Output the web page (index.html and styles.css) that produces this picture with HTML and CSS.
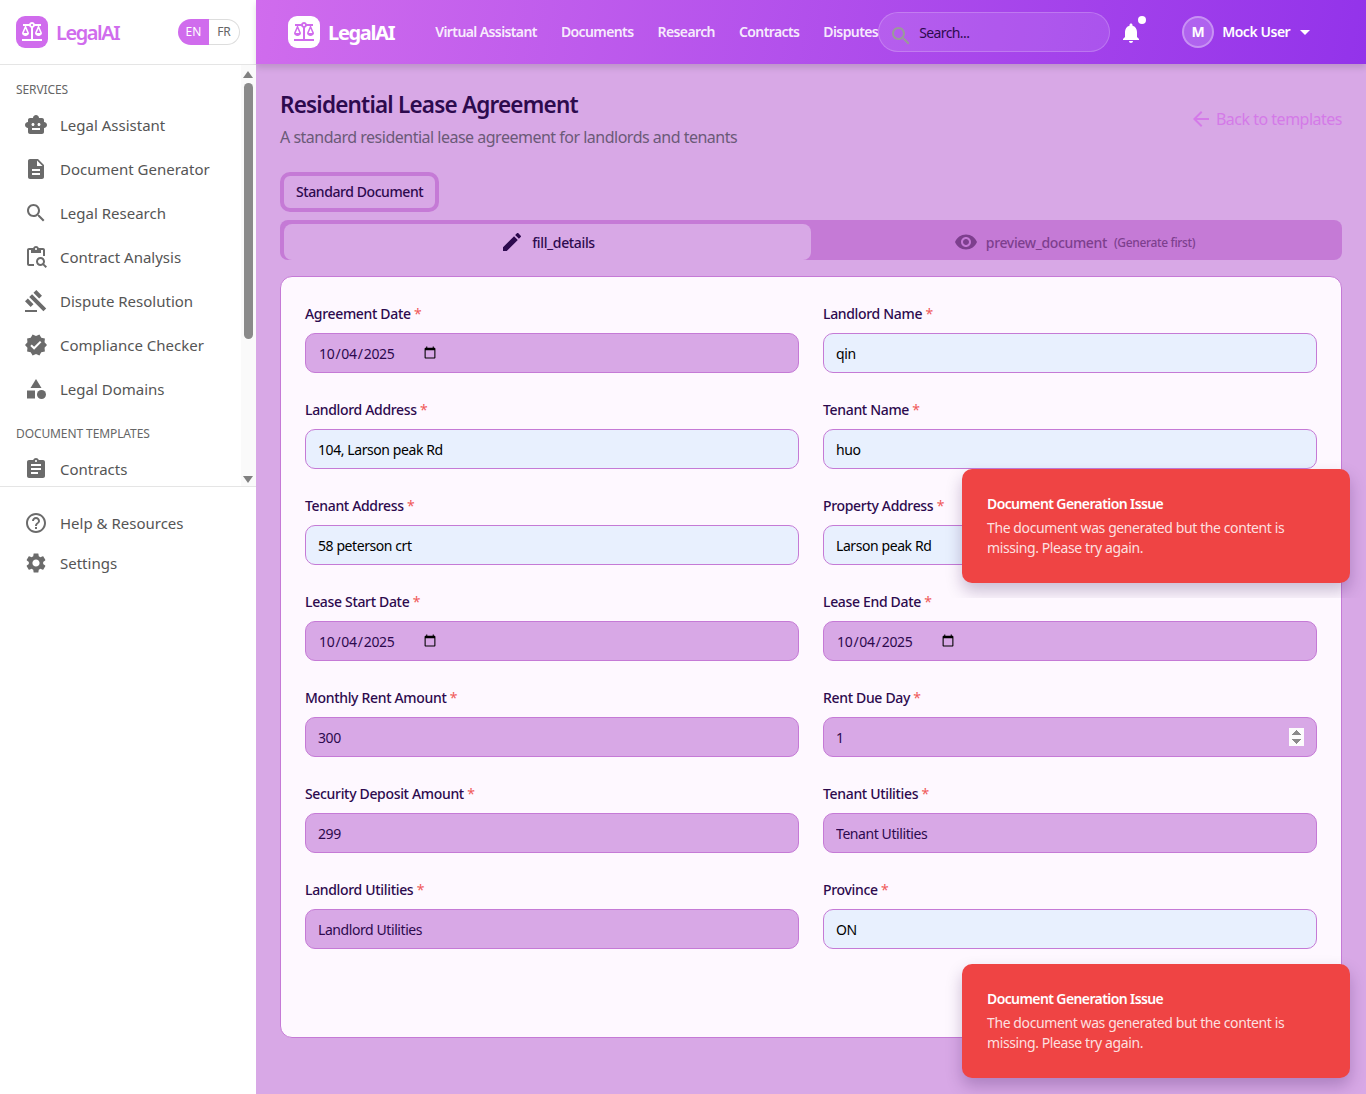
FILE: index.html
```html
<!DOCTYPE html>
<html>
<head>
    <title>LegalAI - Residential Lease Agreement</title>
    <link rel="stylesheet" href="styles.css">
</head>
<body>
    <!-- left sidebar -->
    <aside class="sidebar">
        <div class="side-head">
            <span class="logo logo-purple">
                <svg viewBox="0 0 24 24"><path d="M13 7.83c.85-.3 1.53-.98 1.83-1.83H18l-3 7c0 1.66 1.57 3 3.5 3s3.5-1.34 3.5-3l-3-7h2V4h-6.17c-.41-1.17-1.52-2-2.83-2s-2.42.83-2.83 2H3v2h2l-3 7c0 1.66 1.57 3 3.5 3S9 14.66 9 13L6 6h3.17c.3.85.98 1.53 1.83 1.83V19H2v2h20v-2h-9V7.83zM20.37 13h-3.74l1.87-4.36L20.37 13zm-13 0H3.63L5.5 8.64 7.37 13zM12 6c-.55 0-1-.45-1-1 0-.55.45-1 1-1s1 .45 1 1c0 .55-.45 1-1 1z"/></svg>
            </span>
            <span class="brand brand-purple">LegalAI</span>
            <div class="lang">
                <span class="lang-on">EN</span>
                <span class="lang-off">FR</span>
            </div>
        </div>

        <div class="side-scroll">
            <nav class="side-nav">
                <p class="side-label">SERVICES</p>
                <a class="side-item" href="#">
                    <svg viewBox="0 0 24 24"><path d="M20 9V7c0-1.1-.9-2-2-2h-3c0-1.66-1.34-3-3-3S9 3.34 9 5H6c-1.1 0-2 .9-2 2v2c-1.66 0-3 1.34-3 3s1.34 3 3 3v4c0 1.1.9 2 2 2h12c1.1 0 2-.9 2-2v-4c1.66 0 3-1.34 3-3s-1.34-3-3-3zM7.5 11.5c0-.83.67-1.5 1.5-1.5s1.5.67 1.5 1.5S9.83 13 9 13s-1.5-.67-1.5-1.5zM16 17H8v-2h8v2zm-1-4c-.83 0-1.5-.67-1.5-1.5S14.17 10 15 10s1.5.67 1.5 1.5S15.83 13 15 13z"/></svg>
                    Legal Assistant
                </a>
                <a class="side-item" href="#">
                    <svg viewBox="0 0 24 24"><path d="M14 2H6c-1.1 0-1.99.9-1.99 2L4 20c0 1.1.89 2 1.99 2H18c1.1 0 2-.9 2-2V8l-6-6zm2 16H8v-2h8v2zm0-4H8v-2h8v2zm-3-5V3.5L18.5 9H13z"/></svg>
                    Document Generator
                </a>
                <a class="side-item" href="#">
                    <svg viewBox="0 0 24 24"><path d="M15.5 14h-.79l-.28-.27C15.41 12.59 16 11.11 16 9.5 16 5.91 13.09 3 9.5 3S3 5.91 3 9.5 5.91 16 9.5 16c1.61 0 3.09-.59 4.23-1.57l.27.28v.79l5 4.99L20.49 19l-4.99-5zm-6 0C7.01 14 5 11.99 5 9.5S7.01 5 9.5 5 14 7.01 14 9.5 11.99 14 9.5 14z"/></svg>
                    Legal Research
                </a>
                <a class="side-item" href="#">
                    <svg viewBox="0 0 24 24"><path d="M5 5h2v3h10V5h2v6h2V5c0-1.1-.9-2-2-2h-4.18C14.4 1.84 13.3 1 12 1s-2.4.84-2.82 2H5c-1.1 0-2 .9-2 2v14c0 1.1.9 2 2 2h5v-2H5V5zm7-2c.55 0 1 .45 1 1s-.45 1-1 1-1-.45-1-1 .45-1 1-1z"/><path d="M20.3 18.9c.4-.7.7-1.5.7-2.4 0-2.5-2-4.5-4.5-4.5S12 14 12 16.5s2 4.5 4.5 4.5c.9 0 1.7-.3 2.4-.7l2.7 2.7 1.4-1.4-2.7-2.7zm-3.8.1c-1.4 0-2.5-1.1-2.5-2.5s1.1-2.5 2.5-2.5 2.5 1.1 2.5 2.5-1.1 2.5-2.5 2.5z"/></svg>
                    Contract Analysis
                </a>
                <a class="side-item" href="#">
                    <svg viewBox="0 0 24 24"><path d="M1 21h12v2H1zM5.245 8.07l2.83-2.827 14.14 14.142-2.828 2.828zM12.317 1l5.657 5.656-2.83 2.83-5.654-5.66zM3.825 9.485l5.657 5.657-2.828 2.828-5.657-5.657z"/></svg>
                    Dispute Resolution
                </a>
                <a class="side-item" href="#">
                    <svg viewBox="0 0 24 24"><path d="M23 12l-2.44-2.79.34-3.69-3.61-.82-1.89-3.2L12 2.96 8.6 1.5 6.71 4.69 3.1 5.5l.34 3.7L1 12l2.44 2.79-.34 3.7 3.61.82L8.6 22.5l3.4-1.47 3.4 1.46 1.89-3.19 3.61-.82-.34-3.69L23 12zm-12.91 4.72l-3.8-3.81 1.48-1.48 2.32 2.33 5.85-5.87 1.48 1.48-7.33 7.35z"/></svg>
                    Compliance Checker
                </a>
                <a class="side-item" href="#">
                    <svg viewBox="0 0 24 24"><path d="M12 2l-5.5 9h11z"/><circle cx="17.5" cy="17.5" r="4.5"/><path d="M3 13.5h8v8H3z"/></svg>
                    Legal Domains
                </a>
                <p class="side-label second">DOCUMENT TEMPLATES</p>
                <a class="side-item" href="#">
                    <svg viewBox="0 0 24 24"><path d="M19 3h-4.18C14.4 1.84 13.3 1 12 1c-1.3 0-2.4.84-2.82 2H5c-1.1 0-2 .9-2 2v14c0 1.1.9 2 2 2h14c1.1 0 2-.9 2-2V5c0-1.1-.9-2-2-2zm-7 0c.55 0 1 .45 1 1s-.45 1-1 1-1-.45-1-1 .45-1 1-1zm2 14H7v-2h7v2zm3-4H7v-2h10v2zm0-4H7V7h10v2z"/></svg>
                    Contracts
                </a>
            </nav>
            <!-- scrollbar drawn over the list -->
            <div class="fake-scroll">
                <span class="arrow-up"></span>
                <span class="thumb"></span>
                <span class="arrow-down"></span>
            </div>
        </div>

        <div class="side-foot">
            <a class="side-item foot-item" href="#">
                <svg viewBox="0 0 24 24"><path d="M11 18h2v-2h-2v2zm1-16C6.48 2 2 6.48 2 12s4.48 10 10 10 10-4.48 10-10S17.52 2 12 2zm0 18c-4.41 0-8-3.59-8-8s3.59-8 8-8 8 3.59 8 8-3.59 8-8 8zm0-14c-2.21 0-4 1.79-4 4h2c0-1.1.9-2 2-2s2 .9 2 2c0 2-3 1.75-3 5h2c0-2.25 3-2.5 3-5 0-2.21-1.79-4-4-4z"/></svg>
                Help &amp; Resources
            </a>
            <a class="side-item foot-item" href="#">
                <svg viewBox="0 0 24 24"><path d="M19.14 12.94c.04-.3.06-.61.06-.94 0-.32-.02-.64-.07-.94l2.03-1.58c.18-.14.23-.41.12-.61l-1.92-3.32c-.12-.22-.37-.29-.59-.22l-2.39.96c-.5-.38-1.03-.7-1.62-.94l-.36-2.54c-.04-.24-.24-.41-.48-.41h-3.84c-.24 0-.43.17-.47.41l-.36 2.54c-.59.24-1.13.57-1.62.94l-2.39-.96c-.22-.08-.47 0-.59.22L2.74 8.87c-.12.21-.08.47.12.61l2.03 1.58c-.05.3-.09.63-.09.94s.02.64.07.94l-2.03 1.58c-.18.14-.23.41-.12.61l1.92 3.32c.12.22.37.29.59.22l2.39-.96c.5.38 1.03.7 1.62.94l.36 2.54c.05.24.24.41.48.41h3.84c.24 0 .44-.17.47-.41l.36-2.54c.59-.24 1.13-.56 1.62-.94l2.39.96c.22.08.47 0 .59-.22l1.92-3.32c.12-.22.07-.47-.12-.61l-2.01-1.58zM12 15.6c-1.98 0-3.6-1.62-3.6-3.6s1.62-3.6 3.6-3.6 3.6 1.62 3.6 3.6-1.62 3.6-3.6 3.6z"/></svg>
                Settings
            </a>
        </div>
    </aside>

    <div class="page">
        <!-- top bar -->
        <header class="topbar">
            <span class="logo logo-white">
                <svg viewBox="0 0 24 24"><path d="M13 7.83c.85-.3 1.53-.98 1.83-1.83H18l-3 7c0 1.66 1.57 3 3.5 3s3.5-1.34 3.5-3l-3-7h2V4h-6.17c-.41-1.17-1.52-2-2.83-2s-2.42.83-2.83 2H3v2h2l-3 7c0 1.66 1.57 3 3.5 3S9 14.66 9 13L6 6h3.17c.3.85.98 1.53 1.83 1.83V19H2v2h20v-2h-9V7.83zM20.37 13h-3.74l1.87-4.36L20.37 13zm-13 0H3.63L5.5 8.64 7.37 13zM12 6c-.55 0-1-.45-1-1 0-.55.45-1 1-1s1 .45 1 1c0 .55-.45 1-1 1z"/></svg>
            </span>
            <span class="brand brand-white">LegalAI</span>
            <nav class="top-nav">
                <a href="#">Virtual Assistant</a>
                <a href="#">Documents</a>
                <a href="#">Research</a>
                <a href="#">Contracts</a>
                <a href="#">Disputes</a>
            </nav>
            <div class="search">
                <svg viewBox="0 0 24 24"><path d="M15.5 14h-.79l-.28-.27C15.41 12.59 16 11.11 16 9.5 16 5.91 13.09 3 9.5 3S3 5.91 3 9.5 5.91 16 9.5 16c1.61 0 3.09-.59 4.23-1.57l.27.28v.79l5 4.99L20.49 19l-4.99-5zm-6 0C7.01 14 5 11.99 5 9.5S7.01 5 9.5 5 14 7.01 14 9.5 11.99 14 9.5 14z"/></svg>
                <span>Search...</span>
            </div>
            <div class="bell">
                <svg viewBox="0 0 24 24"><path d="M12 22c1.1 0 2-.9 2-2h-4c0 1.1.89 2 2 2zm6-6v-5c0-3.07-1.64-5.64-4.5-6.32V4c0-.83-.67-1.5-1.5-1.5s-1.5.67-1.5 1.5v.68C7.63 5.36 6 7.92 6 11v5l-2 2v1h16v-1l-2-2z"/></svg>
                <span class="bell-dot"></span>
            </div>
            <div class="user">
                <span class="avatar">M</span>
                <span class="user-name">Mock User</span>
                <svg viewBox="0 0 24 24"><path d="M7 10l5 5 5-5z"/></svg>
            </div>
        </header>

        <main class="content">
            <div class="title-row">
                <div>
                    <h1>Residential Lease Agreement</h1>
                    <p class="subtitle">A standard residential lease agreement for landlords and tenants</p>
                </div>
                <a class="back" href="#">
                    <svg viewBox="0 0 24 24"><path d="M20 11H7.83l5.59-5.59L12 4l-8 8 8 8 1.41-1.41L7.83 13H20v-2z"/></svg>
                    Back to templates
                </a>
            </div>

            <div class="chip-box"><span class="chip">Standard Document</span></div>

            <div class="tabs">
                <div class="tab tab-on">
                    <svg viewBox="0 0 24 24"><path d="M3 17.25V21h3.75L17.81 9.94l-3.75-3.75L3 17.25zM20.71 7.04c.39-.39.39-1.02 0-1.41l-2.34-2.34c-.39-.39-1.02-.39-1.41 0l-1.83 1.83 3.75 3.75 1.83-1.83z"/></svg>
                    fill_details
                </div>
                <div class="tab tab-off">
                    <svg viewBox="0 0 24 24"><path d="M12 4.5C7 4.5 2.73 7.61 1 12c1.73 4.39 6 7.5 11 7.5s9.27-3.11 11-7.5c-1.73-4.39-6-7.5-11-7.5zM12 17c-2.76 0-5-2.24-5-5s2.24-5 5-5 5 2.24 5 5-2.24 5-5 5zm0-8c-1.66 0-3 1.34-3 3s1.34 3 3 3 3-1.34 3-3-1.34-3-3-3z"/></svg>
                    preview_document
                    <small>(Generate first)</small>
                </div>
            </div>

            <form class="card">
                <div class="field">
                    <label>Agreement Date <b>*</b></label>
                    <input class="input" type="date" value="2025-10-04">
                </div>
                <div class="field">
                    <label>Landlord Name <b>*</b></label>
                    <input class="input filled" type="text" value="qin">
                </div>
                <div class="field">
                    <label>Landlord Address <b>*</b></label>
                    <input class="input filled" type="text" value="104, Larson peak Rd">
                </div>
                <div class="field">
                    <label>Tenant Name <b>*</b></label>
                    <input class="input filled" type="text" value="huo">
                </div>
                <div class="field">
                    <label>Tenant Address <b>*</b></label>
                    <input class="input filled" type="text" value="58 peterson crt">
                </div>
                <div class="field">
                    <label>Property Address <b>*</b></label>
                    <input class="input filled" type="text" value="Larson peak Rd">
                </div>
                <div class="field">
                    <label>Lease Start Date <b>*</b></label>
                    <input class="input" type="date" value="2025-10-04">
                </div>
                <div class="field">
                    <label>Lease End Date <b>*</b></label>
                    <input class="input" type="date" value="2025-10-04">
                </div>
                <div class="field">
                    <label>Monthly Rent Amount <b>*</b></label>
                    <input class="input" type="text" value="300">
                </div>
                <div class="field">
                    <label>Rent Due Day <b>*</b></label>
                    <input class="input" type="number" value="1">
                </div>
                <div class="field">
                    <label>Security Deposit Amount <b>*</b></label>
                    <input class="input" type="text" value="299">
                </div>
                <div class="field">
                    <label>Tenant Utilities <b>*</b></label>
                    <input class="input" type="text" value="Tenant Utilities">
                </div>
                <div class="field">
                    <label>Landlord Utilities <b>*</b></label>
                    <input class="input" type="text" value="Landlord Utilities">
                </div>
                <div class="field">
                    <label>Province <b>*</b></label>
                    <input class="input filled" type="text" value="ON">
                </div>
            </form>
        </main>
    </div>

    <!-- toasts sit over the page -->
    <div class="toast-clip">
        <div class="toast">
            <p class="toast-title">Document Generation Issue</p>
            <p class="toast-text">The document was generated but the content is missing. Please try again.</p>
        </div>
    </div>
    <div class="toast toast-low">
        <p class="toast-title">Document Generation Issue</p>
        <p class="toast-text">The document was generated but the content is missing. Please try again.</p>
    </div>
</body>
</html>
```

FILE: styles.css
```css
* {
    box-sizing: border-box;
}

html, body {
    height: 100%;
}

body {
    display: flex;
    position: relative;
    margin: 0;
    overflow: hidden;
    font-family: "Noto Sans", "Open Sans", sans-serif;
    color: #2d0a4e;
    background: #d8a8e6;
}

p, h1 {
    margin: 0;
}

a {
    text-decoration: none;
}

svg {
    display: block;
    flex: none;
    fill: currentColor;
}

/* Sidebar */
.sidebar {
    display: flex;
    flex-direction: column;
    flex: none;
    width: 256px;
    height: 100%;
    background: #fff;
}

.side-head {
    display: flex;
    align-items: center;
    height: 65px;
    padding: 0 16px;
    border-bottom: 1px solid #e5e5e5;
}

.logo {
    display: flex;
    align-items: center;
    justify-content: center;
    width: 32px;
    height: 32px;
    border-radius: 9px;
}

.logo svg {
    width: 24px;
    height: 24px;
}

.logo-purple {
    background: #d06ced;
    color: #fff;
}

.logo-white {
    background: #fff;
    color: #d06ced;
}

.brand {
    margin-left: 8px;
    font-size: 20px;
    font-weight: 600;
}

.brand-purple {
    color: #d06ced;
    letter-spacing: -1.45px;
}

.brand-white {
    color: #fff;
    font-weight: 700;
    letter-spacing: -1.3px;
}

.lang {
    display: flex;
    margin-left: auto;
    height: 26px;
    font-size: 12px;
    line-height: 26px;
    text-align: center;
}

.lang-on {
    width: 31px;
    color: #fff;
    background: #d06ced;
    border-radius: 13px 0 0 13px;
}

.lang-off {
    width: 31px;
    line-height: 24px;
    color: #666;
    border: 1px solid #ddd;
    border-left: 0;
    border-radius: 0 13px 13px 0;
}

.side-scroll {
    position: relative;
    height: 422px;
    overflow: hidden;
    border-bottom: 1px solid #e5e5e5;
}

.side-nav {
    padding: 16px 0 0 0;
}

.side-label {
    height: 16px;
    margin: 0 0 6px 16px;
    padding-top: 1px;
    font-size: 12px;
    line-height: 16px;
    color: #666;
    letter-spacing: -0.1px;
}

.side-label.second {
    margin-top: 14px;
}

.side-item {
    display: flex;
    align-items: center;
    gap: 12px;
    height: 44px;
    padding-left: 24px;
    font-size: 15px;
    color: #555;
}

.side-item svg {
    width: 24px;
    height: 24px;
    color: #6b6b6b;
}

.side-foot {
    padding-top: 16px;
}

.foot-item {
    height: 40px;
}

.fake-scroll {
    position: absolute;
    top: 0;
    right: 0;
    bottom: 0;
    width: 15px;
    background: #fafafa;
}

.thumb {
    position: absolute;
    top: 18px;
    left: 3px;
    width: 9px;
    height: 256px;
    background: #8a8a8a;
    border-radius: 5px;
}

.arrow-up, .arrow-down {
    position: absolute;
    left: 2px;
    width: 0;
    height: 0;
    border-left: 5.5px solid transparent;
    border-right: 5.5px solid transparent;
}

.arrow-up {
    top: 6px;
    border-bottom: 7px solid #808080;
}

.arrow-down {
    bottom: 3px;
    border-top: 7px solid #808080;
}

/* Top bar */
.page {
    display: flex;
    flex-direction: column;
    flex: 1;
    min-width: 0;
}

.topbar {
    display: flex;
    align-items: center;
    flex: none;
    height: 64px;
    padding-left: 32px;
    color: #fff;
    background: linear-gradient(100deg, #d06ced 0%, #9333ea 100%);
    box-shadow: 0 4px 6px rgba(0, 0, 0, 0.12);
}

.top-nav {
    display: flex;
    gap: 24px;
    margin-left: 41px;
    padding-bottom: 2px;
    font-size: 14px;
    font-weight: 600;
    letter-spacing: -0.6px;
}

.top-nav a {
    color: rgba(255, 255, 255, 0.9);
    white-space: nowrap;
}

.search {
    display: flex;
    align-items: center;
    flex: none;
    gap: 6px;
    width: 232px;
    height: 40px;
    padding-left: 10px;
    font-size: 14px;
    letter-spacing: -0.6px;
    background: rgba(255, 255, 255, 0.1);
    border: 1px solid rgba(255, 255, 255, 0.2);
    border-radius: 20px;
}

.search svg {
    width: 24px;
    height: 24px;
    margin-top: 8px;
    color: #9a9a9a;
}

.search span {
    color: #2d0a4e;
}

.bell {
    position: relative;
    margin-top: 2px;
    margin-left: 9px;
}

.bell svg {
    width: 24px;
    height: 24px;
}

.bell-dot {
    position: absolute;
    top: -5px;
    right: -3px;
    width: 8px;
    height: 8px;
    background: #fff;
    border-radius: 50%;
}

.user {
    display: flex;
    align-items: center;
    margin-left: 39px;
}

.avatar {
    width: 32px;
    height: 32px;
    font-size: 14px;
    font-weight: 700;
    line-height: 28px;
    text-align: center;
    background: rgba(255, 255, 255, 0.2);
    border: 2px solid rgba(255, 255, 255, 0.3);
    border-radius: 50%;
}

.user-name {
    margin-left: 8px;
    padding-bottom: 2px;
    font-size: 14px;
    font-weight: 600;
    letter-spacing: -0.45px;
}

.user svg {
    width: 24px;
    height: 24px;
    margin-left: 3px;
}

/* Content */
.content {
    flex: 1;
    padding: 24px;
}

.title-row {
    display: flex;
    align-items: center;
    justify-content: space-between;
}

h1 {
    padding-bottom: 2px;
    font-size: 22.5px;
    font-weight: 600;
    line-height: 34px;
    letter-spacing: -0.8px;
}

.subtitle {
    margin-top: 1px;
    font-size: 16px;
    line-height: 24px;
    color: #6b5a78;
    letter-spacing: -0.5px;
}

.back {
    display: flex;
    align-items: center;
    gap: 3px;
    font-size: 16px;
    color: #d47ae8;
    letter-spacing: -0.5px;
}

.back svg {
    width: 24px;
    height: 24px;
}

.chip-box {
    margin-top: 23px;
}

.chip {
    display: inline-block;
    height: 40px;
    padding: 0 12px;
    font-size: 14px;
    font-weight: 500;
    line-height: 32px;
    letter-spacing: -0.42px;
    border: 4px solid #c57ad6;
    border-radius: 10px;
}

.tabs {
    display: flex;
    height: 40px;
    margin-top: 8px;
    padding: 4px 0 0 4px;
    background: #c57ad6;
    border-radius: 8px;
}

.tab {
    display: flex;
    align-items: center;
    justify-content: center;
    flex: 1;
    gap: 8px;
    font-size: 14px;
    font-weight: 500;
    letter-spacing: -0.35px;
    border-radius: 8px;
}

.tab svg {
    width: 24px;
    height: 24px;
}

.tab-on {
    flex: 0 0 527px;
    background: #d8a8e6;
}

.tab-off {
    padding-right: 4px;
    color: #7d3f8e;
}

.tab-off small {
    margin-left: -1px;
    font-size: 12px;
}

.card {
    display: grid;
    grid-template-columns: 1fr 1fr;
    align-content: start;
    gap: 24px;
    height: 762px;
    margin-top: 16px;
    padding: 24px;
    background: #fef8ff;
    border: 1px solid #c57ad6;
    border-radius: 12px;
}

.field label {
    display: block;
    margin-bottom: 8px;
    padding-top: 1px;
    font-size: 14px;
    font-weight: 500;
    line-height: 23px;
    letter-spacing: -0.33px;
}

.field b {
    font-weight: 400;
    color: #f05a5a;
}

.input {
    display: flex;
    width: 100%;
    height: 40px;
    padding: 0 12px;
    font-family: inherit;
    font-size: 14px;
    letter-spacing: -0.42px;
    color: #2d0a4e;
    background: #d8a8e6;
    border: 1px solid #c57ad6;
    border-radius: 10px;
    outline: none;
}

.filled {
    color: #000;
    background: #e8f0fe;
}

input[type="date"] {
    letter-spacing: -0.3px;
}

input::-webkit-datetime-edit {
    flex: none;
}

input::-webkit-calendar-picker-indicator {
    margin-left: -2px;
}

input::-webkit-inner-spin-button {
    opacity: 1;
}

/* Toasts */
.toast-clip {
    position: absolute;
    top: 449px;
    right: 0;
    width: 424px;
    height: 149px;
    padding: 20px 16px 0 20px;
    overflow: hidden;
}

.toast {
    width: 388px;
    height: 114px;
    padding: 25px 25px;
    font-size: 14px;
    line-height: 20px;
    color: #fff;
    background: #ef4444;
    border-radius: 10px;
    box-shadow: 0 8px 16px rgba(45, 10, 78, 0.25);
}

.toast-low {
    position: absolute;
    right: 16px;
    bottom: 16px;
}

.toast-title {
    font-weight: 600;
    letter-spacing: -0.6px;
}

.toast-text {
    margin-top: 4px;
    letter-spacing: -0.4px;
    color: rgba(255, 255, 255, 0.85);
}
```
